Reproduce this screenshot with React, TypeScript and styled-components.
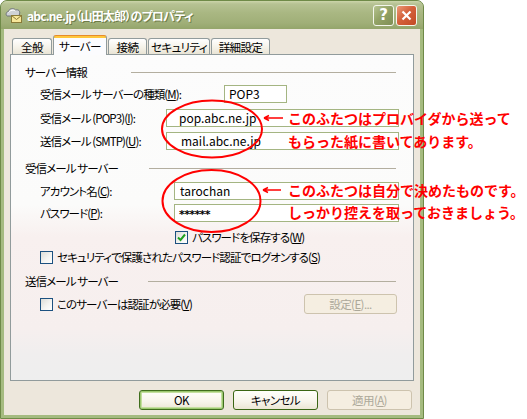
import React from 'react';
import styled, { createGlobalStyle } from 'styled-components';

const GlobalStyle = createGlobalStyle`
  html, body { margin: 0; padding: 0; background: #ffffff; }
  body { font-family: "Noto Sans CJK JP", "Noto Sans", sans-serif; color: #000; }
  #root { width: 527px; height: 419px; }
`;

const Page = styled.div`
  position: relative;
  width: 527px;
  height: 419px;
  overflow: hidden;
  background: #ffffff;
`;

const Window = styled.div`
  box-sizing: border-box;
  width: 424px;
  height: 419px;
  display: flex;
  flex-direction: column;
  border: 1px solid #6f8a48;
  border-radius: 7px 7px 0 0;
  overflow: hidden;
  background: #a5ba82;
`;

const TitleBar = styled.div`
  flex: none;
  height: 28px;
  display: flex;
  align-items: center;
  padding: 0 6px 0 4px;
  background: linear-gradient(to bottom, #ccd5aa 0px, #b6c293 3px, #a9b782 12px, #a0af78 22px, #94a56b 28px);
`;

const TitleIcon = styled.svg`
  flex: none;
  width: 18px;
  height: 17px;
  margin-right: 4px;
`;

const TitleText = styled.div`
  flex: 1;
  font-size: 12px;
  font-weight: 700;
  color: #ffffff;
  letter-spacing: -0.8px;
  font-feature-settings: "palt" 1;
  text-shadow: 1px 1px 0 #6d7c48;
  white-space: nowrap;
`;

const CaptionButton = styled.div<{ $variant: 'help' | 'close' }>`
  flex: none;
  box-sizing: border-box;
  width: 21px;
  height: 21px;
  margin-left: 2px;
  border: 1px solid #f4f6ec;
  border-radius: 3px;
  display: flex;
  align-items: center;
  justify-content: center;
  color: #ffffff;
  font-family: "DejaVu Sans", sans-serif;
  font-weight: 700;
  font-size: 15px;
  background: ${(p) =>
    p.$variant === 'close'
      ? 'linear-gradient(135deg, #eb9a78 0%, #d4613b 45%, #c34a25 100%)'
      : 'linear-gradient(135deg, #b7c491 0%, #93a366 45%, #7f8f55 100%)'};
`;

const Body = styled.div`
  flex: 1;
  display: flex;
  flex-direction: column;
  border: 3px solid #a5bb80;
  border-top: 0;
  background: #ede7dc;
  padding: 6px 5px 0 6px;
  font-size: 11.5px;
  letter-spacing: -0.9px;
  font-feature-settings: "palt" 1;
`;

const TabStrip = styled.div`
  display: flex;
  align-items: flex-end;
  height: 19px;
  padding-left: 2px;
  gap: 1px;
`;

const Tab = styled.div<{ $active?: boolean; $w: number }>`
  box-sizing: border-box;
  position: relative;
  z-index: ${(p) => (p.$active ? 2 : 0)};
  width: ${(p) => p.$w}px;
  height: ${(p) => (p.$active ? 20 : 16)}px;
  margin-bottom: ${(p) => (p.$active ? -1 : 0)}px;
  border: 1px solid #919b9c;
  border-bottom: 0;
  border-top-color: ${(p) => (p.$active ? '#e68b2c' : '#919b9c')};
  border-radius: 3px 3px 0 0;
  display: flex;
  align-items: center;
  justify-content: center;
  line-height: 14px;
  letter-spacing: -0.6px;
  white-space: nowrap;
  padding-top: ${(p) => (p.$active ? 1 : 0)}px;
  background: ${(p) =>
    p.$active
      ? 'linear-gradient(to bottom, #ffc73c 0px, #ffc73c 2px, #fcfcfe 2px)'
      : 'linear-gradient(to bottom, #ffffff 0%, #f4f1e7 60%, #e9e4d5 100%)'};
`;

const Panel = styled.div`
  box-sizing: border-box;
  width: 404px;
  height: 327px;
  border: 1px solid #919b9c;
  display: flex;
  flex-direction: column;
  background: linear-gradient(
    to bottom,
    #fcfcfc 0%,
    #fbfbfa 46%,
    #f8f0ef 56%,
    #f6efee 84%,
    #f0eeee 92%,
    #eeeeee 100%
  );
`;

const SectionHeader = styled.div<{ $mt: number }>`
  display: flex;
  align-items: center;
  height: 14px;
  margin-top: ${(p) => p.$mt}px;
  padding-left: 14px;
  padding-right: 17px;
  line-height: 14px;
`;

const SectionTitle = styled.span<{ $w: number }>`
  flex: none;
  width: ${(p) => p.$w}px;
  white-space: pre;
`;

const Rule = styled.div`
  flex: 1;
  height: 1px;
  background: #b3ae9f;
`;

const FieldRow = styled.div<{ $mt: number }>`
  display: flex;
  align-items: center;
  height: 18px;
  margin-top: ${(p) => p.$mt}px;
  padding-left: 29px;
`;

const FieldLabel = styled.span<{ $w: number; $dy?: number }>`
  flex: none;
  width: ${(p) => p.$w}px;
  margin-top: ${(p) => p.$dy ?? 0}px;
  line-height: 14px;
  white-space: pre;
`;

const TextBox = styled.div<{ $w: number; $pl: number }>`
  flex: none;
  box-sizing: border-box;
  width: ${(p) => p.$w}px;
  height: 18px;
  border: 1px solid #a4b582;
  background: #ffffff;
  padding-left: ${(p) => p.$pl}px;
  display: flex;
  align-items: center;
  font-size: 12px;
  letter-spacing: 0;
  line-height: 14px;
  white-space: nowrap;
`;

const Stars = styled.span`
  font-family: "DejaVu Sans", sans-serif;
  font-weight: 700;
  font-size: 11px;
  letter-spacing: -0.6px;
  padding-top: 3px;
`;

const CheckRow = styled.div<{ $mt: number; $ml: number }>`
  display: flex;
  align-items: center;
  height: 14px;
  margin-top: ${(p) => p.$mt}px;
  padding-left: ${(p) => 29 + p.$ml}px;
  line-height: 14px;
`;

const CheckBox = styled.span`
  flex: none;
  box-sizing: border-box;
  width: 13px;
  height: 13px;
  margin-right: 4px;
  border: 1px solid #1c5180;
  background: linear-gradient(135deg, #dcdcd7 0%, #f4f4f1 55%, #ffffff 100%);
  display: flex;
  align-items: center;
  justify-content: center;
`;

const CheckMark = styled.svg`
  width: 9px;
  height: 9px;
`;

const SettingsRow = styled.div<{ $mt: number }>`
  display: flex;
  align-items: center;
  justify-content: space-between;
  height: 20px;
  margin-top: ${(p) => p.$mt}px;
  padding-left: 29px;
  padding-right: 16px;
  line-height: 14px;
`;

const CheckLabel = styled.label`
  display: flex;
  align-items: center;
  white-space: nowrap;
`;

const Button = styled.div<{ $w: number; $kind: 'default' | 'normal' | 'disabled' }>`
  flex: none;
  box-sizing: border-box;
  width: ${(p) => p.$w}px;
  height: 20px;
  border-radius: 3px;
  display: flex;
  align-items: center;
  justify-content: center;
  line-height: 14px;
  letter-spacing: -0.6px;
  white-space: nowrap;
  color: ${(p) => (p.$kind === 'disabled' ? '#aca899' : '#000000')};
  border: 1px solid
    ${(p) => (p.$kind === 'disabled' ? '#cdc3ae' : p.$kind === 'default' ? '#3f6d1c' : '#3b6614')};
  background: ${(p) =>
    p.$kind === 'disabled'
      ? '#f5eee1'
      : 'linear-gradient(to bottom, #fffffb 0%, #f7f4ea 60%, #ebe6d4 100%)'};
  box-shadow: ${(p) =>
    p.$kind === 'default' ? 'inset 0 0 0 1px #9cc86f, inset 0 0 0 2px #c4df9f' : 'none'};
`;

const ButtonRow = styled.div`
  display: flex;
  justify-content: flex-end;
  gap: 9px;
  width: 404px;
  box-sizing: border-box;
  padding-right: 2px;
  margin-top: 9px;
`;

const U = styled.span`
  text-decoration: underline;
  text-underline-offset: 1px;
`;

const Overlay = styled.svg`
  position: absolute;
  left: 0;
  top: 0;
  width: 527px;
  height: 419px;
  pointer-events: none;
`;

const Note = styled.div<{ $x: number; $y: number; $lh: number }>`
  position: absolute;
  left: ${(p) => p.$x}px;
  top: ${(p) => p.$y}px;
  color: #ff0000;
  font-family: "Noto Sans CJK JP", sans-serif;
  font-weight: 700;
  font-size: 14px;
  line-height: ${(p) => p.$lh}px;
  white-space: nowrap;
  pointer-events: none;
`;

const NoteLine = styled.div``;

const Check = ({ checked }: { checked?: boolean }) => (
  <CheckBox>
    {checked && (
      <CheckMark viewBox="0 0 9 9">
        <polyline points="1,4.5 3.5,7 8,1.5" fill="none" stroke="#21a121" strokeWidth="2" />
      </CheckMark>
    )}
  </CheckBox>
);

export default function App() {
  return (
    <Page>
      <GlobalStyle />
      <Window>
        <TitleBar>
          <TitleIcon viewBox="0 0 18 17">
            <path
              d="M2 9 C0.5 8 1 4.5 3.5 4.5 C4 1.5 8.5 0.5 10.5 3 C13.5 2 15.5 4.5 14.5 7 L14 9 Z"
              fill="#cfd2d6"
              stroke="#6f7479"
              strokeWidth="1"
            />
            <path d="M3.5 5.5 C5 3 9 2.5 10.5 4" fill="none" stroke="#ffffff" strokeWidth="1" />
            <rect x="6.5" y="8.5" width="10" height="7" fill="#f7e79a" stroke="#8a7a37" strokeWidth="1" />
            <polyline points="6.5,8.5 11.5,12.5 16.5,8.5" fill="none" stroke="#8a7a37" strokeWidth="1" />
          </TitleIcon>
          <TitleText>abc.ne.jp（山田太郎）のプロパティ</TitleText>
          <CaptionButton $variant="help">?</CaptionButton>
          <CaptionButton $variant="close">
            <svg width="11" height="11" viewBox="0 0 11 11">
              <path d="M1.5 1.5 L9.5 9.5 M9.5 1.5 L1.5 9.5" stroke="#ffffff" strokeWidth="2.2" />
            </svg>
          </CaptionButton>
        </TitleBar>
        <Body>
          <TabStrip>
            <Tab $w={40}>全般</Tab>
            <Tab $w={54} $active>
              サーバー
            </Tab>
            <Tab $w={39}>接続</Tab>
            <Tab $w={62}>セキュリティ</Tab>
            <Tab $w={59}>詳細設定</Tab>
          </TabStrip>
          <Panel>
            <SectionHeader $mt={10}>
              <SectionTitle $w={106}>サーバー情報</SectionTitle>
              <Rule />
            </SectionHeader>
            <FieldRow $mt={6}>
              <FieldLabel $w={184}>
                受信メール サーバーの種類(<U>M</U>):
              </FieldLabel>
              <TextBox $w={63} $pl={4}>
                POP3
              </TextBox>
            </FieldRow>
            <FieldRow $mt={6}>
              <FieldLabel $w={126}>
                受信メール (POP3)(<U>I</U>):
              </FieldLabel>
              <TextBox $w={233} $pl={12}>
                pop.abc.ne.jp
              </TextBox>
            </FieldRow>
            <FieldRow $mt={5}>
              <FieldLabel $w={126}>
                送信メール (SMTP)(<U>U</U>):
              </FieldLabel>
              <TextBox $w={233} $pl={14}>
                mail.abc.ne.jp
              </TextBox>
            </FieldRow>
            <SectionHeader $mt={11}>
              <SectionTitle $w={124}>受信メール サーバー</SectionTitle>
              <Rule />
            </SectionHeader>
            <FieldRow $mt={7}>
              <FieldLabel $w={134}>
                アカウント名(<U>C</U>):
              </FieldLabel>
              <TextBox $w={225} $pl={5}>
                tarochan
              </TextBox>
            </FieldRow>
            <FieldRow $mt={4}>
              <FieldLabel $w={134}>
                パスワード(<U>P</U>):
              </FieldLabel>
              <TextBox $w={225} $pl={4}>
                <Stars>******</Stars>
              </TextBox>
            </FieldRow>
            <CheckRow $mt={8} $ml={135}>
              <CheckLabel>
                <Check checked />
                パスワードを保存する(<U>W</U>)
              </CheckLabel>
            </CheckRow>
            <CheckRow $mt={6} $ml={0}>
              <CheckLabel>
                <Check />
                セキュリティで保護されたパスワード認証でログオンする(<U>S</U>)
              </CheckLabel>
            </CheckRow>
            <SectionHeader $mt={10}>
              <SectionTitle $w={123}>送信メール サーバー</SectionTitle>
              <Rule />
            </SectionHeader>
            <SettingsRow $mt={6}>
              <CheckLabel>
                <Check />
                このサーバーは認証が必要(<U>V</U>)
              </CheckLabel>
              <Button $w={93} $kind="disabled">
                設定(<U>E</U>)...
              </Button>
            </SettingsRow>
          </Panel>
          <ButtonRow>
            <Button $w={85} $kind="default">
              OK
            </Button>
            <Button $w={85} $kind="normal">
              キャンセル
            </Button>
            <Button $w={85} $kind="disabled">
              適用(<U>A</U>)
            </Button>
          </ButtonRow>
        </Body>
      </Window>

      <Overlay viewBox="0 0 527 419">
        <ellipse cx="212" cy="129" rx="50" ry="28.5" fill="none" stroke="#ff0000" strokeWidth="2" />
        <ellipse cx="211.5" cy="201" rx="49" ry="31" fill="none" stroke="#ff0000" strokeWidth="2" />
        <path d="M264 118 L283 118 M264 118 L269 115.5 M264 118 L269 120.5" fill="none" stroke="#ff0000" strokeWidth="1.5" />
        <path d="M263 190 L281 190 M263 190 L268 187.5 M263 190 L268 192.5" fill="none" stroke="#ff0000" strokeWidth="1.5" />
      </Overlay>
      <Note $x={288} $y={107} $lh={23}>
        <NoteLine>このふたつはプロバイダから送って</NoteLine>
        <NoteLine>もらった紙に書いてあります。</NoteLine>
      </Note>
      <Note $x={288} $y={179} $lh={22}>
        <NoteLine>このふたつは自分で決めたものです。</NoteLine>
        <NoteLine>しっかり控えを取っておきましょう。</NoteLine>
      </Note>
    </Page>
  );
}
